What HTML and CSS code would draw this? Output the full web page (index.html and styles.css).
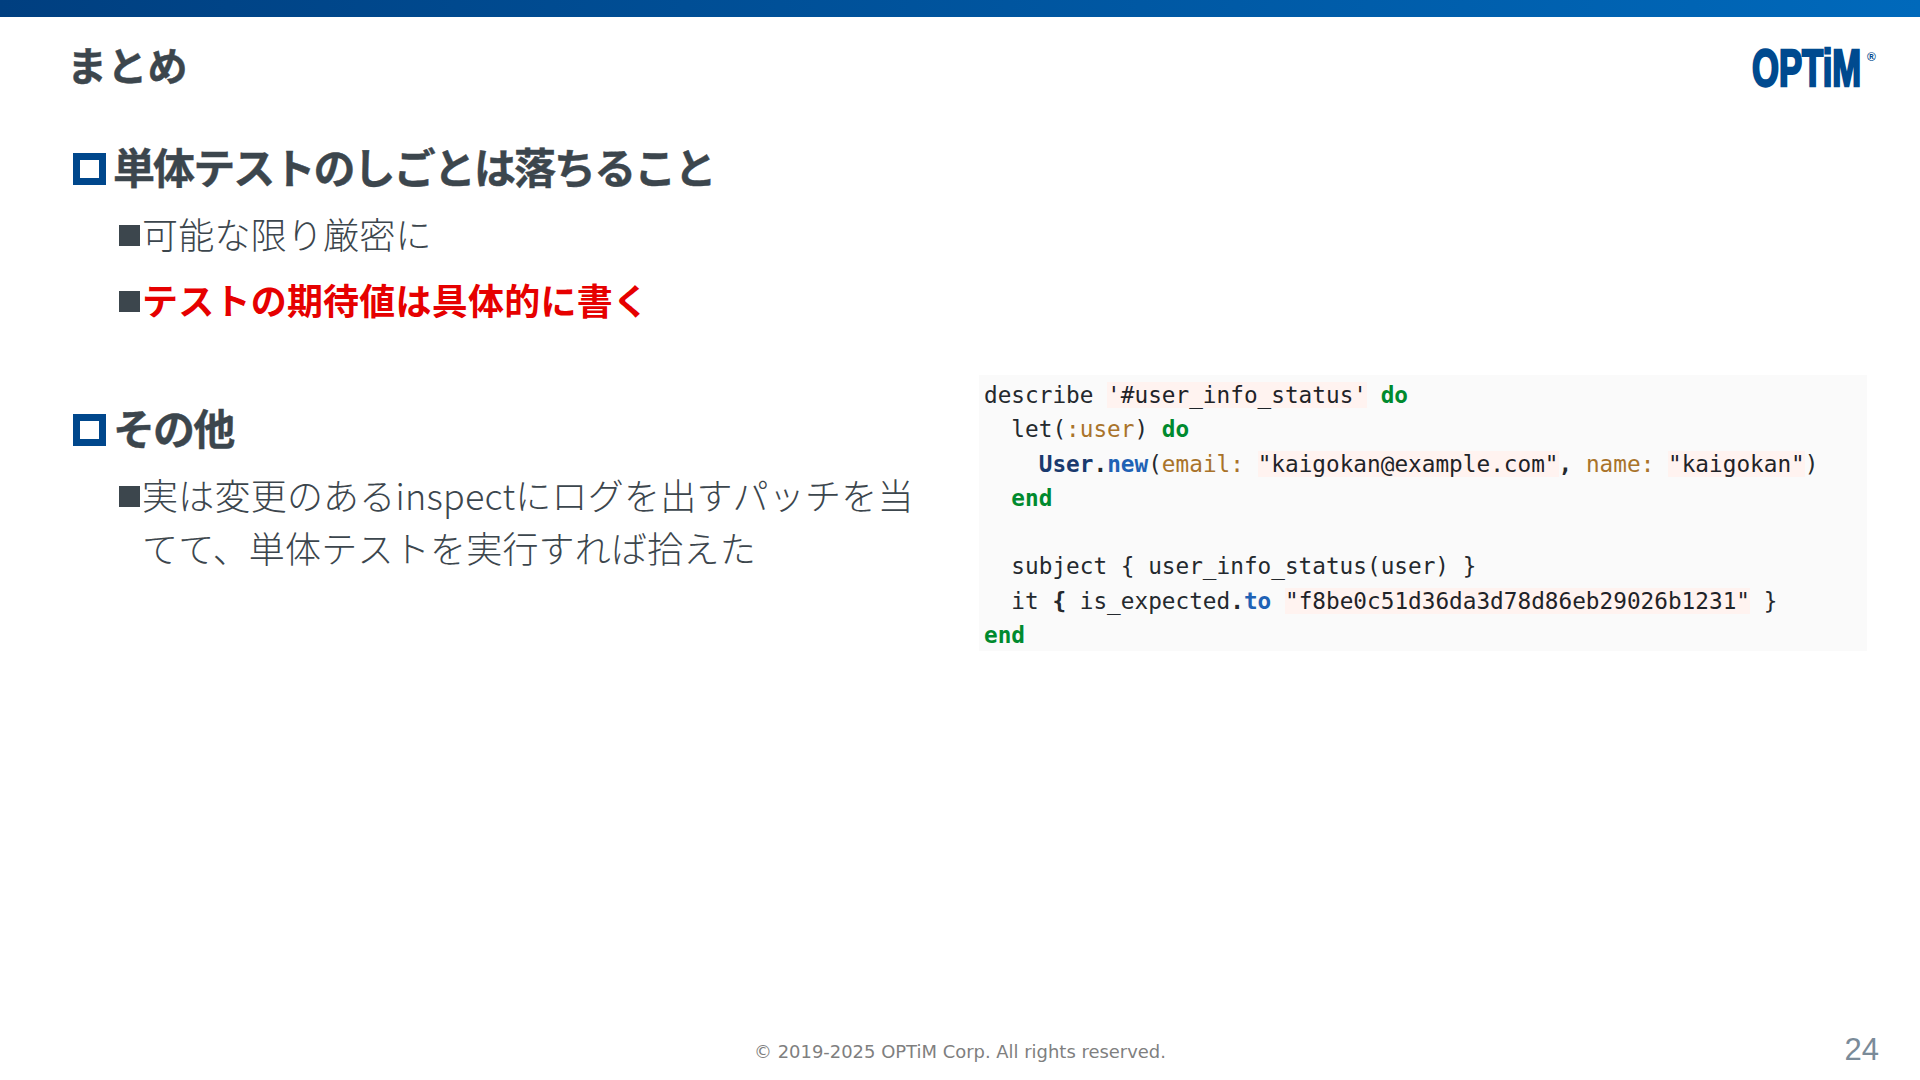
FILE: index.html
```html
<!DOCTYPE html>
<html lang="ja">
<head>
<meta charset="utf-8">
<title>まとめ</title>
<link rel="stylesheet" href="styles.css">
</head>
<body>
<div class="slide">
  <div class="topbar"></div>
  <header class="header">
    <h1 class="title">まとめ</h1>
    <div class="logo" role="img" aria-label="OPTiM">
      <span class="logo-text">OPTiM</span>
      <span class="logo-reg">®</span>
    </div>
  </header>
  <main class="content">
    <div class="col-left">
      <section class="group">
        <h2 class="heading"><span class="box"></span>単体テストのしごとは落ちること</h2>
        <p class="item"><span class="sq"></span><span>可能な限り厳密に</span></p>
        <p class="item strong"><span class="sq"></span><span>テストの期待値は具体的に書く</span></p>
      </section>
      <section class="group second">
        <h2 class="heading"><span class="box"></span>その他</h2>
        <p class="item"><span class="sq"></span><span>実は変更のあるinspectにログを出すパッチを当てて、単体テストを実行すれば拾えた</span></p>
      </section>
    </div>
    <pre class="code"><code>describe <span class="str">'#user_info_status'</span> <span class="kw">do</span>
  let(<span class="sym">:user</span>) <span class="kw">do</span>
    <span class="cls">User</span><span class="op">.</span><span class="fn">new</span>(<span class="sym">email:</span> <span class="str">"kaigokan@example.com"</span><span class="op">,</span> <span class="sym">name:</span> <span class="str">"kaigokan"</span>)
  <span class="kw">end</span>

  subject { user_info_status(user) }
  it <span class="op">{</span> is_expected<span class="op">.</span><span class="fn">to</span> <span class="str">"f8be0c51d36da3d78d86eb29026b1231"</span> }
<span class="kw">end</span></code></pre>
  </main>
  <footer class="footer">
    <span class="copy">© 2019-2025 OPTiM Corp. All rights reserved.</span>
    <span class="page">24</span>
  </footer>
</div>
</body>
</html>
```
FILE: styles.css
```css
* { box-sizing: border-box; }
html, body { margin: 0; padding: 0; background: #fff; }
body { font-family: "Noto Sans CJK JP", "Noto Sans", sans-serif; color: #3c464d; }
.slide { width: 1920px; height: 1080px; display: flex; flex-direction: column; overflow: hidden; }
.topbar { height: 17px; flex: none; background: linear-gradient(90deg, #003f80 0%, #0069bb 100%); }
.header { height: 83px; flex: none; display: flex; justify-content: space-between; align-items: flex-start; padding: 0 43px 0 67px; }
.title { margin: 20px 0 0; font-size: 40px; line-height: 54px; font-weight: 700; letter-spacing: 0.3px; -webkit-text-stroke: 0.4px #3c464d; }
.logo { position: relative; width: 125px; height: 38px; margin-top: 33px; }
.logo-text { display: block; width: 168px; font-family: "Liberation Sans", sans-serif; font-weight: 700; font-size: 51px; line-height: 38px; color: #004a8f; -webkit-text-stroke: 2.5px #004a8f; transform: scaleX(0.68); transform-origin: 0 50%; white-space: nowrap; }
.logo-reg { position: absolute; left: 115px; top: 0; font-family: "Liberation Sans", sans-serif; font-weight: 700; font-size: 12px; line-height: 14px; color: #004a8f; }
.content { flex: 1; display: grid; grid-template-columns: 912px 888px; align-items: start; padding-left: 67px; }
.col-left { padding-top: 36px; }
.group.second { margin-top: 70px; }
.heading { margin: 0 0 11px; display: flex; align-items: center; font-size: 42px; line-height: 60px; font-weight: 700; letter-spacing: -1.9px; white-space: nowrap; -webkit-text-stroke: 0.4px #3c464d; }
.box { width: 33px; height: 32px; margin: 6px 7px 0 6px; border: 7px solid #00478c; flex: none; }
.item { margin: 0; display: flex; padding-left: 52px; font-size: 36px; line-height: 53.5px; font-weight: 300; width: 870px; letter-spacing: 0.22px; }
.item + .item { margin-top: 12.5px; }
.item.strong { font-weight: 700; color: #e60000; }
.sq { width: 21px; height: 21px; margin: 18px 2px 0 0; background: #3c464d; flex: none; }
.code { margin: 275px 0 0; padding: 3px 5px 1px; height: 276px; background: #fafafa; font-family: "DejaVu Sans Mono", monospace; font-size: 22.73px; line-height: 34.25px; color: #24292e; overflow: hidden; }
.code code { font: inherit; }
.str { background: #fff3f0; color: #1f2328; }
.kw { color: #008a2e; font-weight: 700; }
.sym { color: #a9732a; }
.cls { color: #1a3a6e; font-weight: 700; }
.fn { color: #1f62b5; font-weight: 700; }
.op { font-weight: 700; }
.footer { height: 60px; flex: none; display: grid; grid-template-columns: 1fr auto 1fr; align-items: center; padding: 0 41px; }
.copy { grid-column: 2; font-family: "DejaVu Sans", sans-serif; font-size: 17.96px; color: #7f7f7f; padding-top: 2px; }
.page { grid-column: 3; justify-self: end; font-family: "Liberation Sans", sans-serif; font-size: 31px; color: #7a8b99; }
```
